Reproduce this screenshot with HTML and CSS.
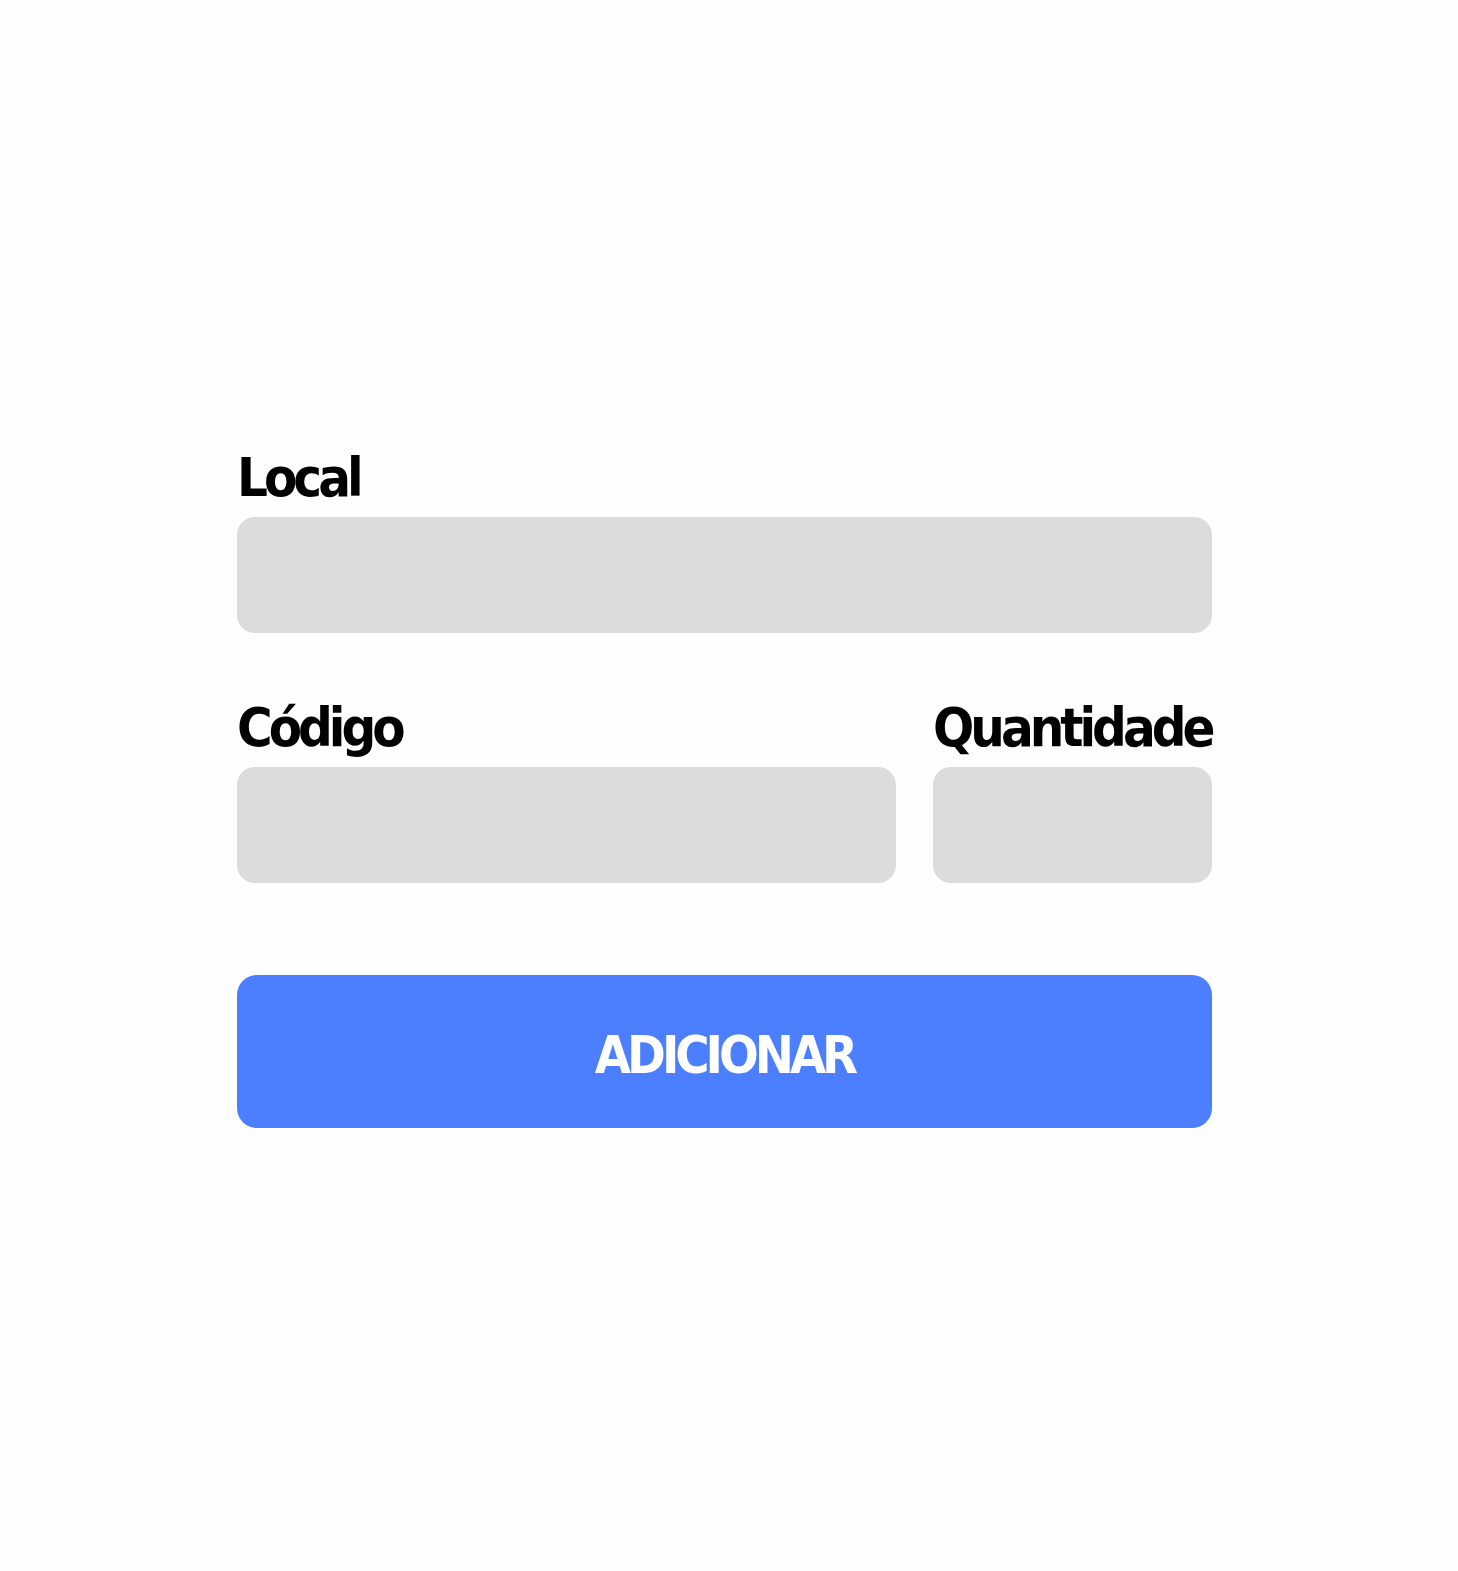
FILE: index.html
```html
<!DOCTYPE html>
<html lang="pt">
<head>
<meta charset="utf-8">
<title>Adicionar</title>
<link rel="stylesheet" href="styles.css">
</head>
<body>
<main class="page">
  <form class="form">
    <div class="field">
      <label class="label" for="local">Local</label>
      <input class="input" id="local" type="text">
    </div>
    <div class="row">
      <div class="field">
        <label class="label" for="codigo">Código</label>
        <input class="input" id="codigo" type="text">
      </div>
      <div class="field">
        <label class="label" for="qtd">Quantidade</label>
        <input class="input" id="qtd" type="text">
      </div>
    </div>
    <button class="button" type="button">ADICIONAR</button>
  </form>
</main>
</body>
</html>
```
FILE: styles.css
```css
html, body {
  margin: 0;
  padding: 0;
  background: #fefefe;
}
.page {
  padding-top: 442px;
  padding-left: 237px;
}
.form {
  width: 975px;
  display: flex;
  flex-direction: column;
}
.field {
  display: flex;
  flex-direction: column;
}
.label {
  font-family: "DejaVu Sans Condensed", "DejaVu Sans", sans-serif;
  font-weight: bold;
  font-size: 54px;
  line-height: 72px;
  letter-spacing: -4px;
  color: #000;
  height: 70px;
  margin-bottom: 5px;
}
.input {
  box-sizing: border-box;
  height: 116px;
  border: none;
  border-radius: 18px;
  background: #dcdcdc;
  margin: 0;
  padding: 0 20px;
}
.row {
  display: grid;
  grid-template-columns: 1fr 279px;
  column-gap: 37px;
  margin-top: 59px;
}
.button {
  margin-top: 92px;
  height: 153px;
  border: none;
  border-radius: 20px;
  background: #4c7fff;
  color: #fff;
  font-family: "DejaVu Sans Condensed", "DejaVu Sans", sans-serif;
  font-weight: bold;
  font-size: 52px;
  letter-spacing: -4px;
  padding: 6px 0 0 0;
}
```
